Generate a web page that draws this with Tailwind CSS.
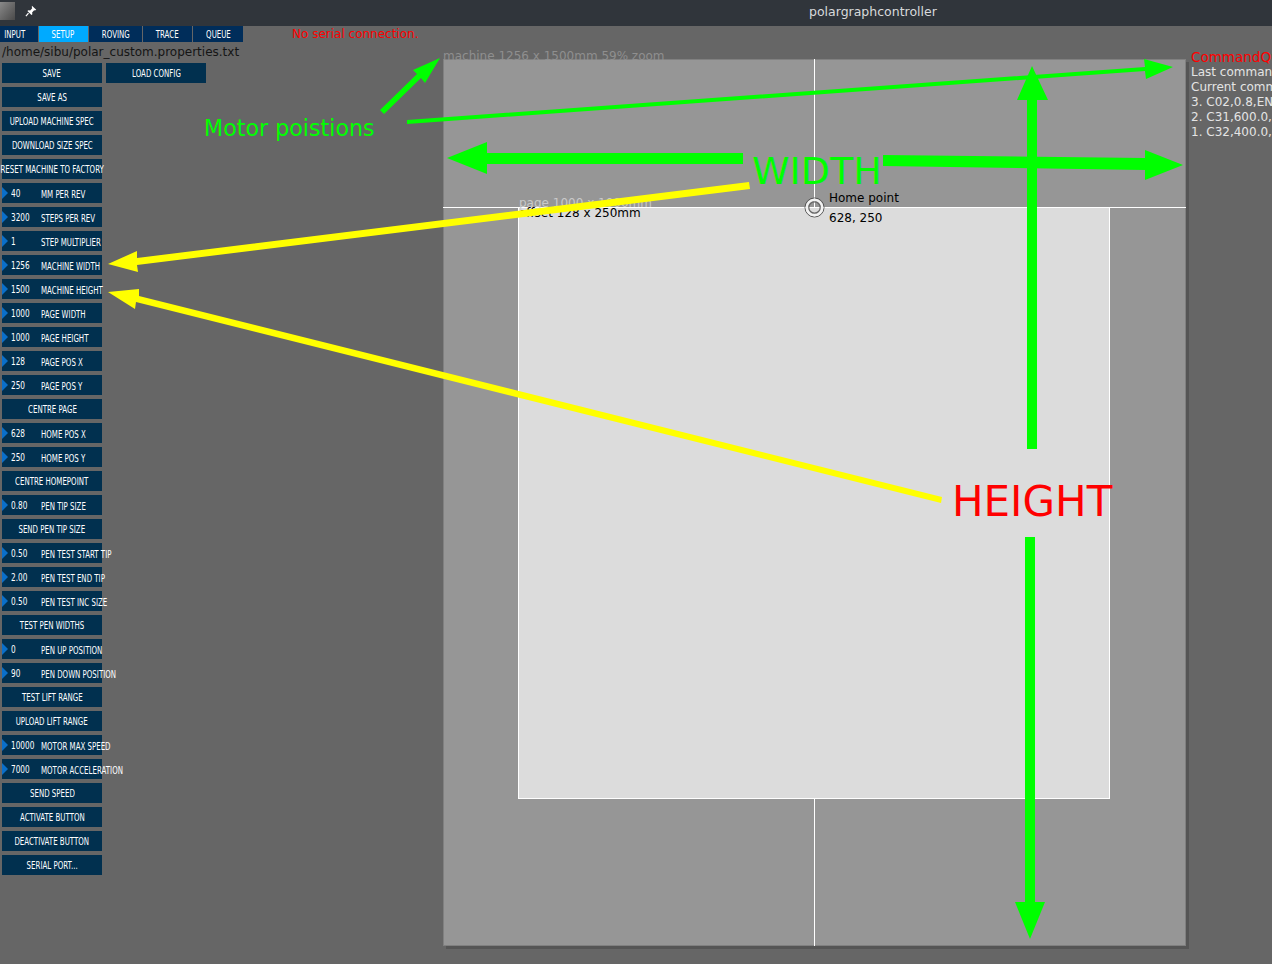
<!DOCTYPE html>
<html lang="en">
<head>
  <meta charset="UTF-8" />
  <title>polargraphcontroller</title>
  <script src="https://cdn.jsdelivr.net/npm/@tailwindcss/browser@4"></script>
</head>
<body class="bg-[#666666] font-['DejaVu_Sans',sans-serif] overflow-hidden">
<div class="relative w-[1272px] h-[964px] overflow-hidden">

  <!-- Title bar -->
  <header class="h-[26px] bg-[#30353b] flex items-start relative">
    <div class="mt-[2px] w-[15px] h-[18px] bg-gradient-to-br from-[#8a8a8a] to-[#4a4a4a]"></div>
    <svg class="ml-[10px] mt-[5px]" width="12" height="12" viewBox="0 0 13 13"><path d="M7.5 .8l4.7 4.4-1.400.8-.9-.4-2.200 2.400.3 2-1 .9-4.400-4.300 1-1 2 .3 2.200-2.400-.4-1z" fill="#fff"/><path d="M3.800 8.800L1 12" stroke="#fff" stroke-width="1.300"/></svg>
    <span class="absolute left-[809px] top-[4px] text-[12.500px] leading-[16px] text-[#d8dadb]">polargraphcontroller</span>
  </header>

  <!-- Tabs -->
  <nav class="flex h-[16px] text-[10.500px] leading-[17px] text-white">
    <div class="w-[38px] bg-[#002d5a] mr-px flex justify-center pr-[8px]"><span class="inline-block scale-x-[.67]">INPUT</span></div>
    <div class="w-[49px] bg-[#00aaff] mr-px flex justify-center pr-[2px]"><span class="inline-block scale-x-[.67]">SETUP</span></div>
    <div class="w-[53px] bg-[#002d5a] mr-px flex justify-center"><span class="inline-block scale-x-[.67]">ROVING</span></div>
    <div class="w-[49px] bg-[#002d5a] mr-px flex justify-center"><span class="inline-block scale-x-[.67]">TRACE</span></div>
    <div class="w-[50px] bg-[#002d5a] flex justify-center"><span class="inline-block scale-x-[.67]">QUEUE</span></div>
    <span class="ml-[49px] text-[12px] text-[#ff0000] leading-[17px]">No serial connection.</span>
  </nav>

  <div class="flex">
    <!-- Control column -->
    <div class="w-[443px] shrink-0">
      <div class="pl-[2px] h-[21px] text-[12px] leading-[21px] text-[#151515]">/home/sibu/polar_custom.properties.txt</div>
      <aside class="pl-[2px] flex flex-col gap-[4px] text-[10.500px] leading-[20px] text-white whitespace-nowrap">
        <div class="flex gap-[4px]">
          <div class="w-[100px] h-[20px] bg-[#01304f] flex justify-center"><span class="inline-block scale-x-[.67]">SAVE</span></div>
          <div class="w-[100px] h-[20px] bg-[#01304f] flex justify-center"><span class="inline-block scale-x-[.67]">LOAD CONFIG</span></div>
        </div>
        <div class="w-[100px] h-[20px] bg-[#01304f] flex justify-center"><span class="inline-block scale-x-[.67]">SAVE AS</span></div>
        <div class="w-[100px] h-[20px] bg-[#01304f] flex justify-center"><span class="inline-block scale-x-[.67]">UPLOAD MACHINE SPEC</span></div>
        <div class="w-[100px] h-[20px] bg-[#01304f] flex justify-center"><span class="inline-block scale-x-[.67]">DOWNLOAD SIZE SPEC</span></div>
        <div class="w-[100px] h-[20px] bg-[#01304f] flex justify-center"><span class="inline-block scale-x-[.67] shrink-0">RESET MACHINE TO FACTORY</span></div>

        <div class="w-[100px] h-[20px] bg-[#01304f] flex items-center"><div class="w-0 h-0 shrink-0 border-y-[6px] border-l-[6px] border-y-transparent border-l-[#0a6fc9] -mt-[1px]"></div><span class="w-[30px] shrink-0 ml-[3px] origin-left scale-x-[.7] inline-block">40</span><span class="shrink-0 origin-left scale-x-[.67] inline-block translate-y-px">MM PER REV</span></div>
        <div class="w-[100px] h-[20px] bg-[#01304f] flex items-center"><div class="w-0 h-0 shrink-0 border-y-[6px] border-l-[6px] border-y-transparent border-l-[#0a6fc9] -mt-[1px]"></div><span class="w-[30px] shrink-0 ml-[3px] origin-left scale-x-[.7] inline-block">3200</span><span class="shrink-0 origin-left scale-x-[.67] inline-block translate-y-px">STEPS PER REV</span></div>
        <div class="w-[100px] h-[20px] bg-[#01304f] flex items-center"><div class="w-0 h-0 shrink-0 border-y-[6px] border-l-[6px] border-y-transparent border-l-[#0a6fc9] -mt-[1px]"></div><span class="w-[30px] shrink-0 ml-[3px] origin-left scale-x-[.7] inline-block">1</span><span class="shrink-0 origin-left scale-x-[.67] inline-block translate-y-px">STEP MULTIPLIER</span></div>
        <div class="w-[100px] h-[20px] bg-[#01304f] flex items-center"><div class="w-0 h-0 shrink-0 border-y-[6px] border-l-[6px] border-y-transparent border-l-[#0a6fc9] -mt-[1px]"></div><span class="w-[30px] shrink-0 ml-[3px] origin-left scale-x-[.7] inline-block">1256</span><span class="shrink-0 origin-left scale-x-[.67] inline-block translate-y-px">MACHINE WIDTH</span></div>
        <div class="w-[100px] h-[20px] bg-[#01304f] flex items-center"><div class="w-0 h-0 shrink-0 border-y-[6px] border-l-[6px] border-y-transparent border-l-[#0a6fc9] -mt-[1px]"></div><span class="w-[30px] shrink-0 ml-[3px] origin-left scale-x-[.7] inline-block">1500</span><span class="shrink-0 origin-left scale-x-[.67] inline-block translate-y-px">MACHINE HEIGHT</span></div>
        <div class="w-[100px] h-[20px] bg-[#01304f] flex items-center"><div class="w-0 h-0 shrink-0 border-y-[6px] border-l-[6px] border-y-transparent border-l-[#0a6fc9] -mt-[1px]"></div><span class="w-[30px] shrink-0 ml-[3px] origin-left scale-x-[.7] inline-block">1000</span><span class="shrink-0 origin-left scale-x-[.67] inline-block translate-y-px">PAGE WIDTH</span></div>
        <div class="w-[100px] h-[20px] bg-[#01304f] flex items-center"><div class="w-0 h-0 shrink-0 border-y-[6px] border-l-[6px] border-y-transparent border-l-[#0a6fc9] -mt-[1px]"></div><span class="w-[30px] shrink-0 ml-[3px] origin-left scale-x-[.7] inline-block">1000</span><span class="shrink-0 origin-left scale-x-[.67] inline-block translate-y-px">PAGE HEIGHT</span></div>
        <div class="w-[100px] h-[20px] bg-[#01304f] flex items-center"><div class="w-0 h-0 shrink-0 border-y-[6px] border-l-[6px] border-y-transparent border-l-[#0a6fc9] -mt-[1px]"></div><span class="w-[30px] shrink-0 ml-[3px] origin-left scale-x-[.7] inline-block">128</span><span class="shrink-0 origin-left scale-x-[.67] inline-block translate-y-px">PAGE POS X</span></div>
        <div class="w-[100px] h-[20px] bg-[#01304f] flex items-center"><div class="w-0 h-0 shrink-0 border-y-[6px] border-l-[6px] border-y-transparent border-l-[#0a6fc9] -mt-[1px]"></div><span class="w-[30px] shrink-0 ml-[3px] origin-left scale-x-[.7] inline-block">250</span><span class="shrink-0 origin-left scale-x-[.67] inline-block translate-y-px">PAGE POS Y</span></div>
        <div class="w-[100px] h-[20px] bg-[#01304f] flex justify-center"><span class="inline-block scale-x-[.67]">CENTRE PAGE</span></div>
        <div class="w-[100px] h-[20px] bg-[#01304f] flex items-center"><div class="w-0 h-0 shrink-0 border-y-[6px] border-l-[6px] border-y-transparent border-l-[#0a6fc9] -mt-[1px]"></div><span class="w-[30px] shrink-0 ml-[3px] origin-left scale-x-[.7] inline-block">628</span><span class="shrink-0 origin-left scale-x-[.67] inline-block translate-y-px">HOME POS X</span></div>
        <div class="w-[100px] h-[20px] bg-[#01304f] flex items-center"><div class="w-0 h-0 shrink-0 border-y-[6px] border-l-[6px] border-y-transparent border-l-[#0a6fc9] -mt-[1px]"></div><span class="w-[30px] shrink-0 ml-[3px] origin-left scale-x-[.7] inline-block">250</span><span class="shrink-0 origin-left scale-x-[.67] inline-block translate-y-px">HOME POS Y</span></div>
        <div class="w-[100px] h-[20px] bg-[#01304f] flex justify-center"><span class="inline-block scale-x-[.67]">CENTRE HOMEPOINT</span></div>
        <div class="w-[100px] h-[20px] bg-[#01304f] flex items-center"><div class="w-0 h-0 shrink-0 border-y-[6px] border-l-[6px] border-y-transparent border-l-[#0a6fc9] -mt-[1px]"></div><span class="w-[30px] shrink-0 ml-[3px] origin-left scale-x-[.7] inline-block">0.80</span><span class="shrink-0 origin-left scale-x-[.67] inline-block translate-y-px">PEN TIP SIZE</span></div>
        <div class="w-[100px] h-[20px] bg-[#01304f] flex justify-center"><span class="inline-block scale-x-[.67]">SEND PEN TIP SIZE</span></div>
        <div class="w-[100px] h-[20px] bg-[#01304f] flex items-center"><div class="w-0 h-0 shrink-0 border-y-[6px] border-l-[6px] border-y-transparent border-l-[#0a6fc9] -mt-[1px]"></div><span class="w-[30px] shrink-0 ml-[3px] origin-left scale-x-[.7] inline-block">0.50</span><span class="shrink-0 origin-left scale-x-[.67] inline-block translate-y-px">PEN TEST START TIP</span></div>
        <div class="w-[100px] h-[20px] bg-[#01304f] flex items-center"><div class="w-0 h-0 shrink-0 border-y-[6px] border-l-[6px] border-y-transparent border-l-[#0a6fc9] -mt-[1px]"></div><span class="w-[30px] shrink-0 ml-[3px] origin-left scale-x-[.7] inline-block">2.00</span><span class="shrink-0 origin-left scale-x-[.67] inline-block translate-y-px">PEN TEST END TIP</span></div>
        <div class="w-[100px] h-[20px] bg-[#01304f] flex items-center"><div class="w-0 h-0 shrink-0 border-y-[6px] border-l-[6px] border-y-transparent border-l-[#0a6fc9] -mt-[1px]"></div><span class="w-[30px] shrink-0 ml-[3px] origin-left scale-x-[.7] inline-block">0.50</span><span class="shrink-0 origin-left scale-x-[.67] inline-block translate-y-px">PEN TEST INC SIZE</span></div>
        <div class="w-[100px] h-[20px] bg-[#01304f] flex justify-center"><span class="inline-block scale-x-[.67]">TEST PEN WIDTHS</span></div>
        <div class="w-[100px] h-[20px] bg-[#01304f] flex items-center"><div class="w-0 h-0 shrink-0 border-y-[6px] border-l-[6px] border-y-transparent border-l-[#0a6fc9] -mt-[1px]"></div><span class="w-[30px] shrink-0 ml-[3px] origin-left scale-x-[.7] inline-block">0</span><span class="shrink-0 origin-left scale-x-[.67] inline-block translate-y-px">PEN UP POSITION</span></div>
        <div class="w-[100px] h-[20px] bg-[#01304f] flex items-center"><div class="w-0 h-0 shrink-0 border-y-[6px] border-l-[6px] border-y-transparent border-l-[#0a6fc9] -mt-[1px]"></div><span class="w-[30px] shrink-0 ml-[3px] origin-left scale-x-[.7] inline-block">90</span><span class="shrink-0 origin-left scale-x-[.67] inline-block translate-y-px">PEN DOWN POSITION</span></div>
        <div class="w-[100px] h-[20px] bg-[#01304f] flex justify-center"><span class="inline-block scale-x-[.67]">TEST LIFT RANGE</span></div>
        <div class="w-[100px] h-[20px] bg-[#01304f] flex justify-center"><span class="inline-block scale-x-[.67]">UPLOAD LIFT RANGE</span></div>
        <div class="w-[100px] h-[20px] bg-[#01304f] flex items-center"><div class="w-0 h-0 shrink-0 border-y-[6px] border-l-[6px] border-y-transparent border-l-[#0a6fc9] -mt-[1px]"></div><span class="w-[30px] shrink-0 ml-[3px] origin-left scale-x-[.7] inline-block">10000</span><span class="shrink-0 origin-left scale-x-[.67] inline-block translate-y-px">MOTOR MAX SPEED</span></div>
        <div class="w-[100px] h-[20px] bg-[#01304f] flex items-center"><div class="w-0 h-0 shrink-0 border-y-[6px] border-l-[6px] border-y-transparent border-l-[#0a6fc9] -mt-[1px]"></div><span class="w-[30px] shrink-0 ml-[3px] origin-left scale-x-[.7] inline-block">7000</span><span class="shrink-0 origin-left scale-x-[.67] inline-block translate-y-px">MOTOR ACCELERATION</span></div>
        <div class="w-[100px] h-[20px] bg-[#01304f] flex justify-center"><span class="inline-block scale-x-[.67]">SEND SPEED</span></div>
        <div class="w-[100px] h-[20px] bg-[#01304f] flex justify-center"><span class="inline-block scale-x-[.67]">ACTIVATE BUTTON</span></div>
        <div class="w-[100px] h-[20px] bg-[#01304f] flex justify-center"><span class="inline-block scale-x-[.67]">DEACTIVATE BUTTON</span></div>
        <div class="w-[100px] h-[20px] bg-[#01304f] flex justify-center"><span class="inline-block scale-x-[.67]">SERIAL PORT...</span></div>
      </aside>
    </div>

    <!-- Machine canvas -->
    <div class="relative mt-[17px] w-[743px] h-[887px] shrink-0 bg-[#969696] shadow-[inset_0_0_0_1px_#808080,3px_3px_0_#555555] text-[12px]">
      <span class="absolute left-0 -top-[10px] leading-[15px] text-[#8f8f8f] whitespace-nowrap">machine 1256 x 1500mm 59% zoom</span>
      <div class="absolute left-[371px] top-0 bottom-0 w-px bg-white"></div>
      <div class="absolute left-[75px] top-[148px] w-[592px] h-[592px] bg-[#dcdcdc] border border-white"></div>
      <div class="absolute left-0 right-0 top-[148px] h-px bg-white"></div>
      <span class="absolute left-[76px] top-[137px] leading-[15px] text-[#c9c9c9] whitespace-nowrap">page 1000 x 1000mm</span>
      <span class="absolute left-[76px] top-[147px] leading-[15px] text-black whitespace-nowrap">offset 128 x 250mm</span>
      <svg class="absolute left-[361px] top-[138px]" width="21" height="21" viewBox="0 0 21 21" fill="none">
        <circle cx="10.500" cy="10.500" r="9.500" stroke="#555555" />
        <circle cx="10.500" cy="10.500" r="7.700" stroke="#f2f2f2" stroke-width="2.600" />
        <circle cx="10.500" cy="10.500" r="5.700" stroke="#666666" stroke-width="1.200" />
      </svg>
      <div class="absolute left-[386px] top-[129px] leading-[20px] text-black whitespace-nowrap">Home point<br />628, 250</div>
    </div>

    <!-- Command queue -->
    <div class="ml-[5px] mt-[8px] text-[12px] leading-[15px] text-[#e4e4e4] whitespace-nowrap">
      <div class="text-[13.500px] text-[#ff0000]">CommandQueue</div>
      <div>Last command:</div>
      <div>Current command:</div>
      <div>3. C02,0.8,END</div>
      <div>2. C31,600.0,END</div>
      <div>1. C32,400.0,END</div>
    </div>
  </div>

  <!-- Annotations drawn over the screenshot -->
  <svg class="absolute left-0 top-0 pointer-events-none" width="1272" height="964" viewBox="0 0 1272 964">
    <g fill="#00ff00" stroke="none">
      <path d="M380 110L417 74L413 70L440 58L425 83L421 78L384 114z"/>
      <path d="M407 120L1145 67L1144 59L1173 67L1146 79L1145 71L407 124z"/>
      <path d="M743 153V164H487V174L447 158L487 142V153z"/>
      <path d="M883 155L1145 158V150L1183 165L1145 180V170L883 166z"/>
      <path d="M1027 449V100H1017L1032 66L1048 100H1037V449z"/>
      <path d="M1025 537H1035V902H1045L1030 939L1015 902H1025z"/>
    </g>
    <g fill="#ffff00" stroke="none">
      <path d="M749 182L137 258L137 251L108 264L138 272L137 265L750 189z"/>
      <path d="M942 497L139 296L139 289L108 292L135 309L136 302L941 503z"/>
    </g>
    <text x="204" y="136" font-family="DejaVu Sans" font-size="22.200" fill="#00ff00">Motor poistions</text>
    <text x="752" y="184" font-family="DejaVu Sans" font-size="38" fill="#00ff00">WIDTH</text>
    <text x="952" y="516" font-family="DejaVu Sans" font-size="42" fill="#ff0000">HEIGHT</text>
  </svg>
</div>
</body>
</html>
